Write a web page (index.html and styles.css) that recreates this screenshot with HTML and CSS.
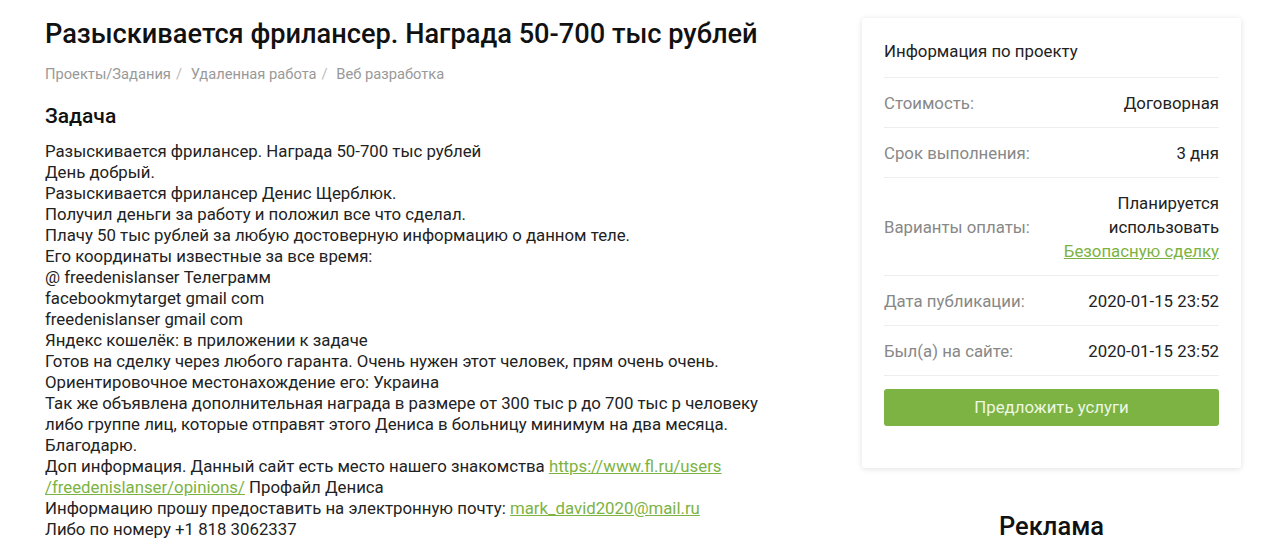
FILE: index.html
```html
<!DOCTYPE html>
<html lang="ru">
<head>
    <meta charset="UTF-8">
    <meta name="viewport" content="width=device-width, initial-scale=1.0">
    <title>Разыскивается фрилансер</title>
    <link rel="stylesheet" href="styles.css">
</head>

<body>
    <div class="page">
        <div class="main">
            <h1 class="title">Разыскивается фрилансер. Награда 50-700 тыс рублей</h1>
            <div class="breadcrumbs">
                <a href="#">Проекты/Задания</a><span class="sep">/</span>
                <a href="#">Удаленная работа</a><span class="sep">/</span>
                <a href="#">Веб разработка</a>
            </div>

            <h2 class="task-title">Задача</h2>
            <div class="task-text">
                Разыскивается фрилансер. Награда 50-700 тыс рублей<br>
                День добрый.<br>
                Разыскивается фрилансер Денис Щерблюк.<br>
                Получил деньги за работу и положил все что сделал.<br>
                Плачу 50 тыс рублей за любую достоверную информацию о данном теле.<br>
                Его координаты известные за все время:<br>
                @ freedenislanser Телеграмм<br>
                facebookmytarget gmail com<br>
                freedenislanser gmail com<br>
                Яндекс кошелёк: в приложении к задаче<br>
                Готов на сделку через любого гаранта. Очень нужен этот человек, прям очень очень.<br>
                Ориентировочное местонахождение его: Украина<br>
                Так же объявлена дополнительная награда в размере от 300 тыс р до 700 тыс р человеку<br>
                либо группе лиц, которые отправят этого Дениса в больницу минимум на два месяца.<br>
                Благодарю.<br>
                Доп информация. Данный сайт есть место нашего знакомства <a href="#">https://www.fl.ru/users<br>/freedenislanser/opinions/</a> Профайл Дениса<br>
                Информацию прошу предоставить на электронную почту: <a href="#">mark_david2020@mail.ru</a><br>
                Либо по номеру +1 818 3062337
            </div>
        </div>

        <div class="sidebar">
            <div class="info-card">
                <div class="info-head">Информация по проекту</div>
                <div class="info-row">
                    <span class="label">Стоимость:</span>
                    <span class="value">Договорная</span>
                </div>
                <div class="info-row">
                    <span class="label">Срок выполнения:</span>
                    <span class="value">3 дня</span>
                </div>
                <div class="info-row">
                    <span class="label">Варианты оплаты:</span>
                    <span class="value">Планируется<br>использовать<br><a href="#">Безопасную сделку</a></span>
                </div>
                <div class="info-row">
                    <span class="label">Дата публикации:</span>
                    <span class="value">2020-01-15 23:52</span>
                </div>
                <div class="info-row">
                    <span class="label">Был(а) на сайте:</span>
                    <span class="value">2020-01-15 23:52</span>
                </div>
                <a class="offer-btn" href="#">Предложить услуги</a>
            </div>

            <h3 class="ads-title">Реклама</h3>
        </div>
    </div>
</body>
</html>
```

FILE: styles.css
```css
body {
    font-family: 'Roboto', 'Noto Sans', sans-serif;
    margin: 0;
    padding: 0;
    background-color: #fff;
    color: #222;
}

a {
    color: #7cb342;
}

.page {
    display: flex;
    gap: 97px;
    padding: 17px 39px 0 45px;
}

.main {
    flex: 1;
    min-width: 0;
}

.title {
    margin: 0;
    font-size: 27.2px;
    line-height: 34px;
    font-weight: 500;
    color: #111;
    white-space: nowrap;
}

.breadcrumbs {
    margin-top: 13px;
    font-size: 14.7px;
    line-height: 20px;
    color: #aaa;
}

.breadcrumbs a {
    color: #999;
    text-decoration: none;
}

.breadcrumbs .sep {
    margin: 0 5px;
    color: #bbb;
}

.task-title {
    margin: 19px 0 0 0;
    font-size: 21px;
    line-height: 26px;
    font-weight: 500;
    color: #111;
}

.task-text {
    margin-top: 12px;
    font-size: 16.8px;
    line-height: 21px;
    white-space: nowrap;
}

.sidebar {
    width: 379px;
    flex-shrink: 0;
    padding-top: 1px;
}

.info-card {
    background: #fff;
    box-shadow: 0 1px 6px rgba(0, 0, 0, 0.12);
    border-radius: 3px;
    padding: 0 22px 42px 22px;
}

.info-head {
    padding: 22px 0 15px 0;
    font-size: 16.8px;
    line-height: 22px;
    color: #222;
    border-bottom: 1px solid #eee;
}

.info-row {
    display: flex;
    justify-content: space-between;
    align-items: center;
    padding: 13px 0 12px 0;
    font-size: 16.8px;
    line-height: 24px;
    border-bottom: 1px solid #eee;
}

.info-row .label {
    color: #888;
}

.info-row .value {
    color: #222;
    text-align: right;
}

.offer-btn {
    display: block;
    margin-top: 13px;
    height: 37px;
    line-height: 37px;
    border-radius: 3px;
    background-color: #7cb342;
    color: #eef7e4;
    text-align: center;
    text-decoration: none;
    font-size: 16.8px;
}

.ads-title {
    margin: 43px 0 0 0;
    text-align: center;
    font-size: 25.5px;
    line-height: 30px;
    font-weight: 500;
    color: #111;
}
```
